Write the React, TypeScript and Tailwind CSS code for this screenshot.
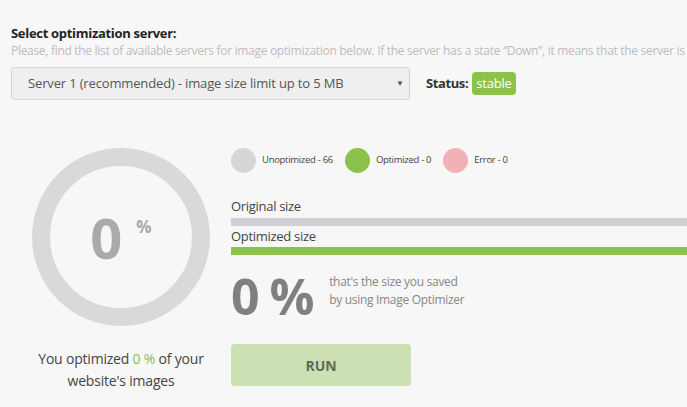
const legend = [
  { label: "Unoptimized - 66", color: "bg-[#d6d6d6]" },
  { label: "Optimized - 0", color: "bg-[#8bc34a]" },
  { label: "Error - 0", color: "bg-[#f2b1b5]" },
]

export default function App() {
  return (
    <div className="w-[687px] h-[407px] overflow-hidden bg-[#f7f7f7] text-[#333] font-['Open_Sans',sans-serif]">
      <div className="pl-[11px] pt-[23px]">
        <div className="text-[13px] font-bold leading-[20px] text-[#222] tracking-[-0.3px]">Select optimization server:</div>
        <div className="text-[12px] leading-[16px] text-[#bdbdbd] whitespace-nowrap tracking-[-0.3px]">
          Please, find the list of available servers for image optimization below. If the server has a state “Down”, it means that the server is temporarily unavailable.
        </div>
        <div className="flex items-center mt-[8px]">
          <div className="w-[399px] h-[33px] flex items-center justify-between bg-[#efefef] border border-[#d6d6d6] rounded-[3px] pl-[16px] pr-[5px]">
            <span className="text-[13px] text-[#555] tracking-[-0.15px]">Server 1 (recommended) - image size limit up to 5 MB</span>
            <span className="text-[8px] text-[#555] mb-[2px]">▼</span>
          </div>
          <span className="ml-[16px] text-[13px] font-bold text-[#333] tracking-[-0.4px]">Status:</span>
          <span className="ml-[4px] bg-[#8bc34a] text-white text-[13px] rounded-[4px] px-[4px] h-[23px] flex items-center tracking-[-0.2px]">stable</span>
        </div>
      </div>

      <div className="flex pl-[32px] mt-[48px]">
        <div className="w-[178px] flex flex-col items-center shrink-0">
          <div className="w-[178px] h-[178px] rounded-full border-[18px] border-[#d9d9d9] flex items-center justify-center">
            <span className="text-[56px] font-bold text-[#aaa] leading-none">0</span>
            <span className="ml-[14px] mb-[20px] text-[17px] font-bold text-[#aaa]">%</span>
          </div>
          <div className="mt-[22px] text-[14px] leading-[22px] text-[#444] text-center whitespace-nowrap tracking-[-0.2px]">
            You optimized <span className="text-[#8bc34a]">0 %</span> of your
            <br />
            website's images
          </div>
        </div>

        <div className="ml-[21px] flex-1 min-w-0">
          <div className="flex items-center">
            {legend.map((item) => (
              <div key={item.label} className="flex items-center gap-[6px] mr-[12px]">
                <div className={`w-[25px] h-[25px] rounded-full ${item.color}`} />
                <span className="text-[9.5px] text-[#444] tracking-[-0.3px]">{item.label}</span>
              </div>
            ))}
          </div>

          <div className="mt-[24px] text-[13px] leading-[18px] text-[#444] tracking-[-0.3px]">Original size</div>
          <div className="h-[8px] bg-[#d0d0d4] w-[600px] mt-[3px]" />
          <div className="text-[13px] leading-[20px] text-[#444] tracking-[-0.3px]">Optimized size</div>
          <div className="h-[8px] bg-[#8bc34a] w-[600px] mt-[1px]" />

          <div className="flex items-start mt-[16px]">
            <span className="text-[50px] font-bold text-[#808080] leading-[50px] tracking-[-1.5px]">0 %</span>
            <div className="ml-[16px] mt-[2px] text-[12px] leading-[18px] text-[#888] tracking-[-0.3px]">
              that's the size you saved
              <br />
              by using Image Optimizer
            </div>
          </div>

          <button className="mt-[23px] w-[180px] h-[42px] rounded-[4px] bg-[#cce0b4] text-[14px] font-bold text-[#5e6a54]">RUN</button>
        </div>
      </div>
    </div>
  )
}
